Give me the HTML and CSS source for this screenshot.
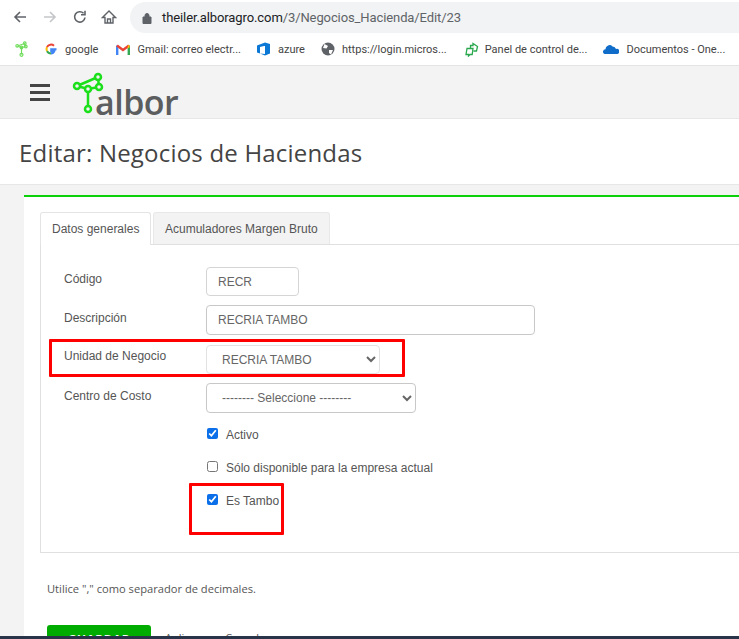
FILE: index.html
```html
<!DOCTYPE html>
<html lang="es">
<head>
<meta charset="utf-8">
<title>Editar: Negocios de Haciendas</title>
<link rel="stylesheet" href="styles.css">
</head>
<body>
<div class="screen">
  <header class="toolbar">
    <svg class="tool" width="16" height="16" viewBox="0 0 16 16"><path d="M14 8H3M8 3 3 8l5 5" fill="none" stroke="#5f6368" stroke-width="1.6"/></svg>
    <svg class="tool" width="16" height="16" viewBox="0 0 16 16"><path d="M2 8h11M8 3l5 5-5 5" fill="none" stroke="#c4c6c9" stroke-width="1.6"/></svg>
    <svg class="tool" width="16" height="16" viewBox="0 0 16 16"><path d="M13 8.500A5.200 5.200 0 1 1 11.600 4.300M13 1.800v4h-4" fill="none" stroke="#5f6368" stroke-width="1.6"/></svg>
    <svg class="tool" width="16" height="16" viewBox="0 0 16 16"><path d="M8 2 1.500 8.500H4V14h8V8.500h2.500zM6.500 14v-4h3v4" fill="none" stroke="#5f6368" stroke-width="1.400"/></svg>
    <div class="omnibox">
      <svg width="10" height="12" viewBox="0 0 10 12"><path d="M1 5h8v6.500H1zM3 5V3.500a2 2 0 0 1 4 0V5" fill="#5f6368" stroke="#5f6368"/></svg>
      <span class="url">theiler.alboragro.com<span class="url-path">/3/Negocios_Hacienda/Edit/23</span></span>
    </div>
  </header>
  <nav class="bookmarks">
    <span class="bm bm-first"><svg width="13" height="16" viewBox="0 0 13 16"><g fill="none" stroke="#6fdc5a" stroke-width="1.200"><path d="M2.500 5 9.500 2.500M2.500 5 6.500 6.500 10.500 5.500M6.500 6.500V13.500M9.500 2.500 10.500 5.500"/><circle cx="2.200" cy="4.800" r="1.300"/><circle cx="9.800" cy="2.200" r="1.300"/><circle cx="10.800" cy="5.500" r="1.300"/><circle cx="6.500" cy="6.500" r="1.300"/><circle cx="6.500" cy="13.800" r="1.500"/></g></svg></span>
    <span class="bm bm-google"><svg width="14" height="14" viewBox="0 0 14 14"><path d="M12.500 7.200H7.200v2h3.100a3.500 3.500 0 0 1-3.300 2.300" fill="none" stroke="#4285f4" stroke-width="2"/><path d="M7 11.500A4.500 4.500 0 0 1 3 9" fill="none" stroke="#34a853" stroke-width="2"/><path d="M3 9a4.500 4.500 0 0 1 0-4" fill="none" stroke="#fbbc05" stroke-width="2"/><path d="M3 5a4.500 4.500 0 0 1 7-1.200" fill="none" stroke="#ea4335" stroke-width="2"/></svg>google</span>
    <span class="bm"><svg width="14" height="11" viewBox="0 0 14 11"><path d="M1.200 11V1.500" stroke="#4285f4" stroke-width="2.400"/><path d="M12.800 11V1.500" stroke="#34a853" stroke-width="2.400"/><path d="M1 1.500 7 6l6-4.500" fill="none" stroke="#ea4335" stroke-width="2.400"/><path d="M12 1.200 13.500 1v2.500L11.500 4.500z" fill="#fbbc05"/></svg>Gmail: correo electr...</span>
    <span class="bm bm-azure"><svg width="15" height="14" viewBox="0 0 15 14"><path d="M9 .5 1 3.500v7l3 1V5l5-1.200zM9 .5l5 1.500v9.500L9 13.500l-5-2 5 .6z" fill="#0a78d4"/></svg>azure</span>
    <span class="bm bm-wide"><svg width="14" height="14" viewBox="0 0 14 14"><circle cx="7" cy="7" r="6.500" fill="#5f6368"/><path d="M3.500 2 7 4 5.500 6.500 2 6zM8 8h4L10 12.500 8 11z" fill="#fff"/></svg>https://login.micros...</span>
    <span class="bm bm-panel"><svg width="14" height="15" viewBox="0 0 14 15"><g fill="none" stroke="#2aa84f" stroke-width="1.300"><path d="M2 6.500h6l-.8 6H5l-1.500 1.500V12.500H1z"/><path d="M5.500 6.500V3.500H8V1.500l4.500 3-1 4.500H8.500"/></g></svg>Panel de control de...</span>
    <span class="bm"><svg width="16" height="10" viewBox="0 0 16 10"><path d="M1.500 10A2.500 2.500 0 0 1 2.500 5.200 4 4 0 0 1 9.500 2.500 3.500 3.500 0 0 1 13 5a2.500 2.500 0 0 1 1.500 5z" fill="#0f6cc8"/></svg>Documentos - One...</span>
  </nav>
  <div class="appbar">
    <div class="burger"><i></i><i></i><i></i></div>
    <div class="brand">
      <svg class="brand-mark" width="34" height="46" viewBox="0 0 34 46"><g fill="none" stroke="#1adf1a" stroke-width="2.500"><path d="M6 15 27 6M6 15l11 3 11-2M27 6l1 10M17 18v20"/><circle cx="6" cy="15" r="3" fill="#f3f3f3"/><circle cx="27" cy="6" r="3" fill="#f3f3f3"/><circle cx="17" cy="18" r="3" fill="#f3f3f3"/><circle cx="28" cy="16" r="3" fill="#f3f3f3"/><circle cx="17" cy="38" r="3" fill="#f3f3f3"/></g></svg>
      <span class="brand-name">albor</span>
    </div>
  </div>
  <div class="page-head"><h1>Editar: Negocios de Haciendas</h1></div>
  <main class="content">
    <section class="card">
      <div class="tabs">
        <span class="tab tab-active">Datos generales</span>
        <span class="tab">Acumuladores Margen Bruto</span>
      </div>
      <div class="panel">
        <div class="row row-code"><label class="lbl">Código</label><input class="field f-code" value="RECR"></div>
        <div class="row row-desc"><label class="lbl">Descripción</label><input class="field f-desc" value="RECRIA TAMBO"></div>
        <div class="row row-unit"><label class="lbl">Unidad de Negocio</label><select class="field f-unit"><option>RECRIA TAMBO</option></select></div>
        <div class="row row-cost"><label class="lbl">Centro de Costo</label><select class="field f-cost"><option>-------- Seleccione --------</option></select></div>
        <label class="check c-1"><input type="checkbox" checked>Activo</label>
        <label class="check c-2"><input type="checkbox">Sólo disponible para la empresa actual</label>
        <label class="check c-3"><input type="checkbox" checked>Es Tambo</label>
      </div>
      <p class="note">Utilice "," como separador de decimales.</p>
      <div class="actions">
        <button class="save">GUARDAR</button>
        <span class="link link-apply">Aplicar</span>
        <span class="link">Cancelar</span>
      </div>
    </section>
  </main>
  <div class="mark mark-unit"></div>
  <div class="mark mark-tambo"></div>
  <div class="taskbar"></div>
</div>
</body>
</html>
```
FILE: styles.css
```css
* { box-sizing: border-box; }
html, body { margin: 0; padding: 0; background: #fff; }
.screen { position: relative; width: 739px; height: 639px; overflow: hidden; font-family: "Liberation Sans", Arial, sans-serif; color: #555; display: flex; flex-direction: column; }
.toolbar { height: 33px; flex: none; display: flex; align-items: center; padding: 0 0 0 12px; background: #fff; }
.tool { margin-right: 14px; flex: none; }
.tool:nth-child(3) { margin-right: 13px; }
.tool:nth-child(4) { margin-right: 13px; }
.omnibox { flex: 1; height: 31px; margin-top: 2px; background: #f1f3f4; border-radius: 16px 0 0 16px; display: flex; align-items: center; padding-left: 12px; gap: 10px; }
.url { font: 13px "Roboto", sans-serif; color: #202124; letter-spacing: -0.1px; white-space: nowrap; }
.url-path { color: #5f6368; }
.bookmarks { height: 33px; flex: none; display: flex; align-items: center; background: #fff; padding-left: 15px; font: 11px "Roboto", sans-serif; color: #444; white-space: nowrap; border-bottom: 1px solid #e4e4e4; }
.bm { display: flex; align-items: center; gap: 7px; margin-right: 15px; }
.bm-first { margin-right: 16px; }
.bm-google { margin-right: 18px; }
.bm-azure { margin-right: 16px; }
.bm-wide { margin-right: 18px; }
.bm-panel { gap: 6px; margin-right: 16px; }
.appbar { height: 53px; flex: none; background: #f3f3f3; border-bottom: 1px solid #e7e7e7; display: flex; padding-left: 30px; }
.burger { margin-top: 18px; width: 20px; display: flex; flex-direction: column; gap: 4px; }
.burger i { display: block; height: 3px; background: #444; }
.brand { position: relative; margin-left: 21px; width: 120px; }
.brand-mark { position: absolute; left: 0; top: 5px; }
.brand-name { position: absolute; left: 24px; top: 15px; font: 600 34px/42px "Open Sans", sans-serif; color: #5c5d5f; letter-spacing: -0.5px; }
.page-head { height: 66px; flex: none; background: #fff; border-bottom: 1px solid #e7e7e7; padding: 17px 0 0 19px; }
h1 { margin: 0; font: 400 24px/34px "Open Sans", sans-serif; color: #444; white-space: nowrap; letter-spacing: 0.2px; }
.content { flex: 1; background: #f3f3f3; padding: 10px 0 0 24px; }
.card { background: #fff; border-top: 2px solid #0ad10a; padding: 15px 0 0 16px; height: 450px; }
.tabs { display: flex; height: 33px; gap: 2px; position: relative; z-index: 1; }
.tab { height: 32px; padding: 0 11px; font-size: 12px; line-height: 32px; background: #f3f3f3; border: 1px solid #e8e8e8; border-bottom: 0; border-radius: 3px 3px 0 0; color: #555; white-space: nowrap; }
.tab-active { background: #fff; height: 33px; border-color: #e4e4e4; width: 111px; }
.panel { margin-top: -1px; height: 309px; border: 1px solid #e0e0e0; border-right: 0; padding: 22px 0 0 23px; display: flex; flex-direction: column; }
.row { display: flex; align-items: flex-start; }
.lbl { width: 142px; flex: none; font-size: 12px; line-height: 16px; padding-top: 4px; color: #555; }
.field { font: 12px "Liberation Sans", Arial, sans-serif; color: #666; background: #fff; border: 1px solid #d5d5d5; border-radius: 4px; padding: 0 11px; outline: none; }
.f-code { width: 93px; height: 29px; }
.f-desc { width: 329px; height: 30px; border-color: #c8c8c8; }
.f-unit { width: 174px; height: 29px; border-color: #e2e2e2; }
.f-cost { width: 210px; height: 30px; border-color: #c8c8c8; }
.row-desc { margin-top: 9px; }
.row-desc .lbl { padding-top: 5px; }
.row-unit { margin-top: 10px; }
.row-unit .lbl { padding-top: 3px; }
.row-cost { margin-top: 9px; }
.row-cost .lbl { padding-top: 5px; }
.check { display: flex; align-items: flex-start; margin-left: 142px; font-size: 12px; line-height: 16px; color: #555; white-space: nowrap; }
.check input { width: 11px; height: 11px; margin: 1px 8px 0 1px; accent-color: #0a6fe8; }
.c-1 { margin-top: 14px; }
.c-2 { margin-top: 17px; }
.c-3 { margin-top: 17px; }
.note { margin: 29px 0 0 7px; font: 11.15px/14px "Open Sans", sans-serif; color: #555; }
.actions { display: flex; align-items: flex-start; margin: 29px 0 0 7px; }
.save { width: 104px; height: 28px; padding: 0; background: #00ac00; border: 0; border-radius: 3px; color: #fff; font: 700 12px "Open Sans", sans-serif; letter-spacing: 0.5px; }
.link { font: 11px/16px "Open Sans", sans-serif; color: #555; margin-top: 5px; }
.link-apply { margin-left: 14px; margin-right: 25px; }
.mark { position: absolute; border: 3px solid #f00; border-radius: 1px; }
.mark-unit { left: 49px; top: 339px; width: 356px; height: 38px; }
.mark-tambo { left: 189px; top: 483px; width: 95px; height: 52px; }
.taskbar { position: absolute; left: 0; right: 0; bottom: 0; height: 3px; background: #2a3449; }
```
